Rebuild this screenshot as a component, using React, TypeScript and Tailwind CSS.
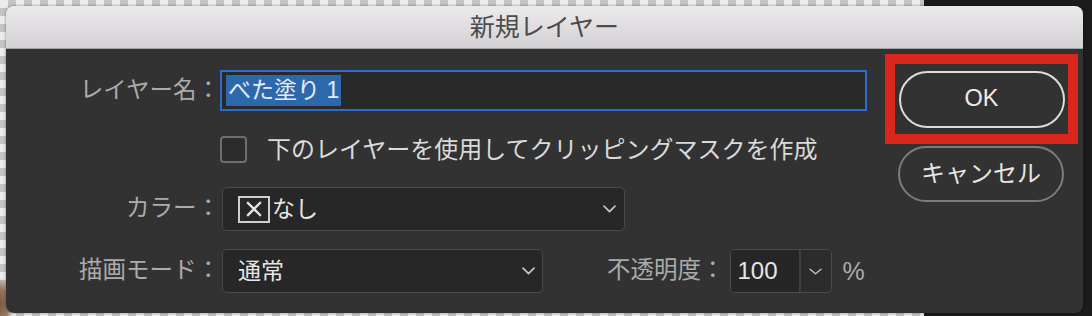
import React from "react";

const Chevron = ({ w = 13, h = 8, sw = 1.7, color = "#c2c2c2" }: { w?: number; h?: number; sw?: number; color?: string }) => (
  <svg width={w} height={h} viewBox={`0 0 ${w} ${h}`}>
    <path
      d={`M1 1.2 L${w / 2} ${h - 1.3} L${w - 1} 1.2`}
      fill="none"
      stroke={color}
      strokeWidth={sw}
      strokeLinecap="round"
      strokeLinejoin="round"
    />
  </svg>
);

export default function App() {
  return (
    <div className="w-[1092px] h-[316px] overflow-hidden pt-[6px] pl-[6px] font-['Liberation_Sans','Noto_Sans_CJK_JP',sans-serif] bg-[image:linear-gradient(to_right,transparent_924px,#1b1b1b_924px),radial-gradient(ellipse_14px_26px_at_0px_304px,#7a5a44_0,#9a7660_60%,transparent_100%),conic-gradient(#c4c4c4_25%,#ececec_0_50%,#c4c4c4_0_75%,#ececec_0)] bg-[length:100%_100%,100%_100%,16px_16px]">
      <div className="w-[1077px] h-[307px] rounded-[8px] overflow-hidden flex flex-col shadow-[0_0_3px_rgba(0,0,0,0.45)]">
        {/* Title bar */}
        <div className="h-[43px] shrink-0 bg-gradient-to-b from-[#eceaec] to-[#d3d1d3] border-b border-[#a3a3a3] flex items-center justify-center text-[25px] text-[#4b4b4b] leading-none">
          新規レイヤー
        </div>
        {/* Body */}
        <div className="flex-1 bg-[#323232] flex">
          {/* Form */}
          <div className="w-[879px] pt-[21px] flex flex-col">
            {/* Row 1: name */}
            <div className="flex items-center h-[41px]">
              <div className="w-[214px] text-right text-[23.5px] text-[#ababab] leading-none">レイヤー名：</div>
              <div className="w-[647px] h-[41px] border-2 border-[#2c6dcf] bg-[#292929] flex items-center pl-[4px]">
                <span className="h-[31px] px-[2px] flex items-center bg-[#2d68ad] text-[23px] text-[#e4ecf4] leading-none">
                  べた塗り 1
                </span>
              </div>
            </div>
            {/* Row 2: checkbox */}
            <div className="flex items-center h-[27px] mt-[25px]">
              <div className="w-[214px]" />
              <div className="w-[27px] h-[27px] rounded-[4px] border-2 border-[#6e6e6e] bg-[#2c2c2c]" />
              <div className="ml-[20px] text-[24px] text-[#dadada] leading-none">下のレイヤーを使用してクリッピングマスクを作成</div>
            </div>
            {/* Row 3: color */}
            <div className="flex items-center h-[44px] mt-[24px]">
              <div className="w-[214px] text-right text-[23.5px] text-[#ababab] leading-none">カラー：</div>
              <div className="ml-[2px] w-[403px] h-[44px] rounded-[5px] border border-[#4a4a4a] bg-[#272727] flex items-center pl-[15px] pr-[8px]">
                <div className="w-[32px] h-[27px] border-2 border-[#cfcfcf] flex items-center justify-center">
                  <svg width="16" height="16" viewBox="0 0 16 16">
                    <path d="M2 2 L14 14 M14 2 L2 14" stroke="#e2e2e2" strokeWidth="2.4" strokeLinecap="square" />
                  </svg>
                </div>
                <span className="ml-[2px] text-[23px] text-[#e6e6e6] leading-none">なし</span>
                <div className="flex-1" />
                <Chevron />
              </div>
            </div>
            {/* Row 4: mode + opacity */}
            <div className="flex items-center h-[44px] mt-[18px]">
              <div className="w-[214px] text-right text-[23.5px] text-[#ababab] leading-none">描画モード：</div>
              <div className="ml-[2px] w-[321px] h-[44px] rounded-[5px] border border-[#4a4a4a] bg-[#272727] flex items-center pl-[15px] pr-[7px]">
                <span className="text-[23px] text-[#e6e6e6] leading-none">通常</span>
                <div className="flex-1" />
                <Chevron />
              </div>
              <div className="ml-[64px] text-[23.5px] text-[#ababab] leading-none">不透明度：</div>
              <div className="ml-[5px] w-[102px] h-[44px] rounded-[5px] border border-[#4a4a4a] flex overflow-hidden">
                <div className="w-[70px] bg-[#262626] flex items-center pl-[7px] text-[24px] text-[#e6e6e6] leading-none border-r-2 border-[#3e3e3e]">
                  100
                </div>
                <div className="flex-1 bg-[#2c2c2c] flex items-center justify-center">
                  <Chevron w={13} h={7} sw={1.4} />
                </div>
              </div>
              <div className="ml-[11px] text-[25px] text-[#ababab] leading-none">%</div>
            </div>
          </div>
          {/* Buttons */}
          <div className="flex flex-col pt-[5px]">
            <div className="w-[193px] h-[90px] border-[10px] border-[#da261c] flex items-center justify-center">
              <div className="w-[166px] h-[57px] rounded-full border-2 border-[#dcdcdc] flex items-center justify-center text-[23.5px] text-[#ececec] leading-none">
                OK
              </div>
            </div>
            <div className="ml-[13px] mt-[2px] w-[166px] h-[56px] rounded-full border-2 border-[#7c7c7c] flex items-center justify-center text-[24px] text-[#e6e6e6] leading-none">
              キャンセル
            </div>
          </div>
        </div>
      </div>
    </div>
  );
}
